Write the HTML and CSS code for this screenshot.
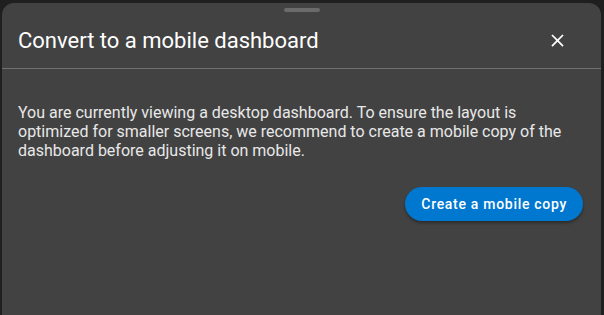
FILE: index.html
```html
<!DOCTYPE html>
<html lang="en">
<head>
<meta charset="utf-8">
<title>Convert to a mobile dashboard</title>
<link rel="stylesheet" href="styles.css">
</head>
<body>
<div class="backdrop">
  <div class="sheet">
    <div class="handle-row"><div class="handle"></div></div>
    <div class="header">
      <h2 class="title">Convert to a mobile dashboard</h2>
      <button class="close" aria-label="Close">
        <svg width="21" height="21" viewBox="0 0 24 24"><path d="M19,6.41L17.59,5L12,10.59L6.41,5L5,6.41L10.59,12L5,17.59L6.41,19L12,13.41L17.59,19L19,17.59L13.41,12L19,6.41Z" fill="#ffffff"/></svg>
      </button>
    </div>
    <div class="divider"></div>
    <div class="content">
      <p class="text">You are currently viewing a desktop dashboard. To ensure the layout is optimized for smaller screens, we recommend to create a mobile copy of the dashboard before adjusting it on mobile.</p>
      <div class="actions">
        <button class="primary">Create a mobile copy</button>
      </div>
    </div>
  </div>
</div>
</body>
</html>
```

FILE: styles.css
```css
html, body {
  margin: 0;
  padding: 0;
  height: 100%;
  background: #1f1f1f;
  font-family: Roboto, "Noto Sans", sans-serif;
  color: #e1e1e1;
}
.backdrop {
  height: 100%;
  padding: 3px 3px 0 2px;
  box-sizing: border-box;
  display: flex;
}
.sheet {
  flex: 1;
  background: #424242;
  border-radius: 12px 12px 0 0;
  display: flex;
  flex-direction: column;
}
.handle-row {
  display: flex;
  justify-content: center;
  padding-top: 5px;
}
.handle {
  width: 36px;
  height: 4px;
  border-radius: 2px;
  background: #6b6b6b;
}
.header {
  display: flex;
  align-items: center;
  justify-content: space-between;
  height: 56px;
  padding: 0 33px 0 16px;
}
.title {
  margin: 0;
  font-size: 22px;
  font-weight: 400;
  color: #ffffff;
}
.close {
  background: none;
  border: 0;
  padding: 0;
  width: 21px;
  height: 21px;
  display: flex;
  align-items: center;
  justify-content: center;
  cursor: pointer;
}
.divider {
  height: 1px;
  background: #6f6f6f;
}
.content {
  padding: 34px 18px 0 16px;
}
.text {
  margin: 0;
  max-width: 575px;
  font-size: 16px;
  line-height: 19px;
  color: #e8e8e8;
}
.actions {
  display: flex;
  justify-content: flex-end;
  padding-top: 27px;
}
.primary {
  background: #0078d0;
  color: #ffffff;
  border: 0;
  border-radius: 17px;
  height: 34px;
  padding: 0 16px;
  font-family: Roboto, sans-serif;
  font-size: 14px;
  font-weight: 500;
  letter-spacing: 0.7px;
  box-shadow: 0 2px 3px rgba(0,0,0,0.35);
  cursor: pointer;
}
```
